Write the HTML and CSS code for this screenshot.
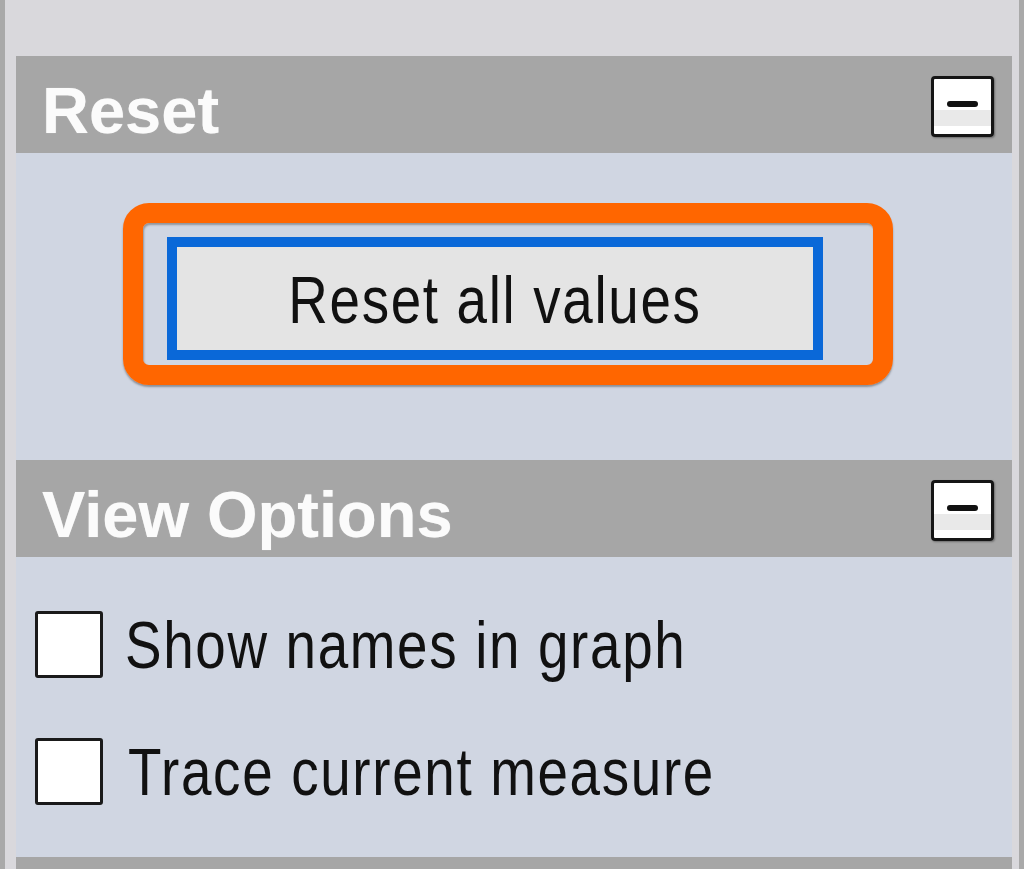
FILE: index.html
```html
<!DOCTYPE html>
<html lang="en">
<head>
<meta charset="utf-8">
<title>Panel</title>
<link rel="stylesheet" href="styles.css">
</head>
<body>
<div class="frame">
  <section class="section">
    <div class="section-head">
      <span class="section-title">Reset</span>
      <span class="collapse"><span class="minus"></span></span>
    </div>
    <div class="section-body reset-body">
      <div class="focus-ring">
        <button class="btn" type="button"><span class="narrow narrow-center">Reset all values</span></button>
      </div>
    </div>
  </section>
  <section class="section">
    <div class="section-head">
      <span class="section-title">View Options</span>
      <span class="collapse"><span class="minus"></span></span>
    </div>
    <div class="section-body options-body">
      <label class="option"><span class="box"></span><span class="option-label narrow">Show names in graph</span></label>
      <label class="option"><span class="box"></span><span class="option-label option-label-2 narrow">Trace current measure</span></label>
    </div>
  </section>
  <section class="section">
    <div class="section-head"></div>
  </section>
</div>
</body>
</html>
```

FILE: styles.css
```css
html, body {
  margin: 0;
  padding: 0;
  background: #d9d8dc;
}

.frame {
  box-sizing: border-box;
  width: 1024px;
  height: 869px;
  overflow: hidden;
  border-left: 5px solid #a9a9a9;
  border-right: 5px solid #a9a9a9;
  padding: 56px 7px 0 11px;
  font-family: "Liberation Sans", Arial, sans-serif;
}

.section-head {
  box-sizing: border-box;
  height: 97px;
  background: #a6a6a6;
  display: flex;
  justify-content: space-between;
  align-items: flex-start;
}

.section-title {
  color: #fbfbfb;
  font-weight: bold;
  font-size: 65px;
  line-height: 85px;
  padding-top: 12px;
  padding-left: 26px;
  white-space: nowrap;
  text-shadow: 0 0 1px rgba(255, 255, 255, 0.6);
}

.collapse {
  box-sizing: border-box;
  width: 63px;
  height: 61px;
  margin-top: 20px;
  margin-right: 18px;
  border: 3px solid #151515;
  border-radius: 4px;
  background: linear-gradient(#ffffff 0 56%, #e9e9e9 56% 86%, #ffffff 86%);
  box-shadow: 1px 1px 2px rgba(0, 0, 0, 0.35);
  display: flex;
  justify-content: center;
  padding-top: 22px;
}

.minus {
  display: block;
  width: 31px;
  height: 6px;
  border-radius: 3px;
  background: #111;
}

.section-body {
  box-sizing: border-box;
  background: #d0d6e2;
}

.reset-body {
  height: 307px;
  padding: 50px 0 0 107px;
}

.focus-ring {
  box-sizing: border-box;
  width: 770px;
  height: 182px;
  border: 20px solid #ff6600;
  border-radius: 26px;
  padding: 14px 0 0 24px;
  box-shadow: inset 1px 2px 2px rgba(70, 70, 70, 0.45), 0 2px 2px rgba(60, 60, 60, 0.45);
}

.btn {
  box-sizing: border-box;
  display: block;
  width: 656px;
  height: 123px;
  margin: 0;
  border: 10px solid #0a68d8;
  background: #e4e4e4;
  color: #111;
  font-family: "Liberation Sans", Arial, sans-serif;
  font-size: 66px;
  line-height: 100px;
  padding: 3px 0 0 0;
  text-align: center;
  white-space: nowrap;
}

.narrow {
  display: inline-block;
  letter-spacing: 2px;
  transform: scaleX(0.83);
  transform-origin: left center;
}

.narrow-center {
  transform-origin: center center;
}

.options-body {
  height: 300px;
  padding: 54px 0 0 19px;
  display: flex;
  flex-direction: column;
  gap: 60px;
}

.option {
  display: flex;
  align-items: flex-start;
  height: 67px;
}

.box {
  box-sizing: border-box;
  flex: none;
  width: 68px;
  height: 67px;
  border: 3px solid #1a1a1a;
  border-radius: 3px;
  background: #ffffff;
}

.option-label {
  margin-left: 22px;
  color: #111;
  font-size: 66px;
  line-height: 67px;
  padding-top: 1px;
  white-space: nowrap;
}

.option-label-2 {
  margin-left: 25px;
}
```
